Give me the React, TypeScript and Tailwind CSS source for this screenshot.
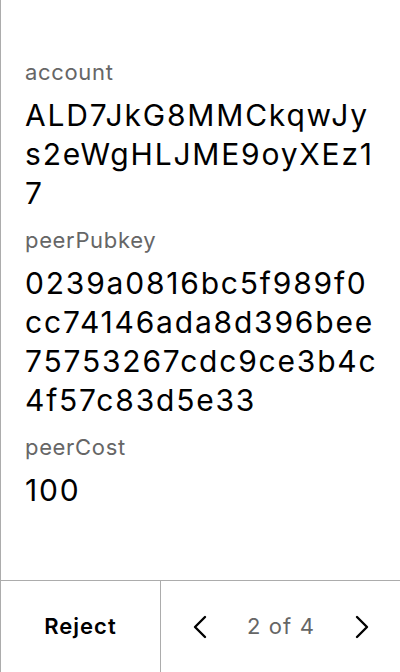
import React from 'react';

const fields = [
  { label: 'account', value: 'ALD7JkG8MMCkqwJys2eWgHLJME9oyXEz17' },
  { label: 'peerPubkey', value: '0239a0816bc5f989f0cc74146ada8d396bee75753267cdc9ce3b4c4f57c83d5e33' },
  { label: 'peerCost', value: '100' },
];

const Chevron: React.FC<{ dir: 'left' | 'right' }> = ({ dir }) => (
  <svg width="16" height="24" viewBox="0 0 16 24" fill="none">
    <path
      d={dir === 'left' ? 'M13 2 L3 12 L13 22' : 'M3 2 L13 12 L3 22'}
      stroke="#000"
      strokeWidth="2.4"
      strokeLinecap="round"
      strokeLinejoin="round"
    />
  </svg>
);

const App: React.FC = () => {
  return (
    <div
      className="flex flex-col w-[400px] h-[672px] bg-white border-l border-[#acacac]"
      style={{ fontFamily: 'Inter, "Noto Sans", sans-serif' }}
    >
      <div className="flex-1 flex flex-col gap-[13px] pl-6 pr-5 pt-[58px]">
        {fields.map((f) => (
          <div key={f.label} className="flex flex-col">
            <div className="text-[22px] leading-[28px] tracking-[0.03em] text-[#666666]">{f.label}</div>
            <div className="mt-[10px] text-[30px] leading-[39px] tracking-[0.06em] text-black break-all">
              {f.value}
            </div>
          </div>
        ))}
      </div>

      <div className="flex h-[92px] border-t border-[#acacac]">
        <button className="w-[160px] flex items-center justify-center text-[22px] font-semibold tracking-[0.045em] text-black border-r border-[#acacac]">
          Reject
        </button>
        <div className="flex-1 flex items-center justify-between pl-[31px] pr-[30px]">
          <button className="flex items-center">
            <Chevron dir="left" />
          </button>
          <span className="text-[22px] tracking-[0.05em] text-[#666666]">2 of 4</span>
          <button className="flex items-center">
            <Chevron dir="right" />
          </button>
        </div>
      </div>
    </div>
  );
};

export default App;
